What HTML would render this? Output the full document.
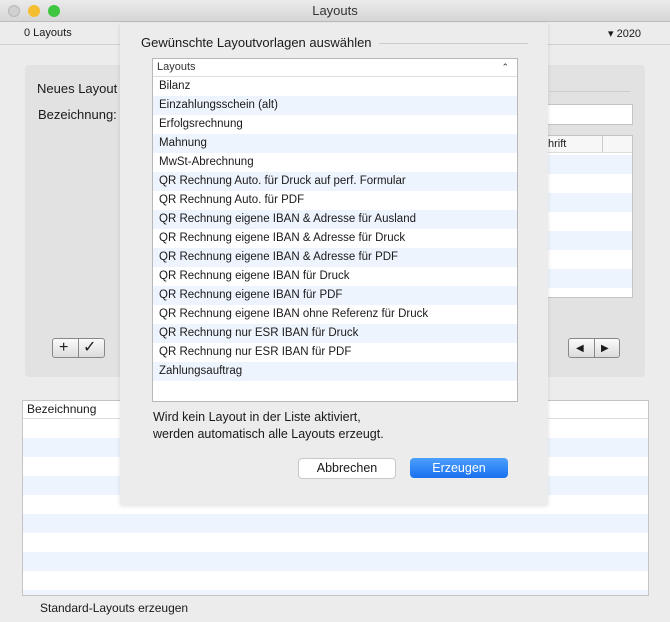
<!DOCTYPE html><html><head><style>
*{box-sizing:border-box}
body{margin:0;width:670px;height:622px;overflow:hidden;background:#ececec;font-family:"Liberation Sans",sans-serif;font-size:12px;color:#1a1a1a;position:relative}
.a{position:absolute}
.row{height:19px;line-height:19px;padding-left:6px;font-size:11.5px}
.b{background:#eef4fd}
</style></head><body>
<div class="a" style="left:0;top:0;width:670px;height:22px;background:linear-gradient(#ebebeb,#d6d6d6);border-bottom:1px solid #bdbdbd;text-align:center;line-height:22px;font-size:13px;color:#333">Layouts</div>
<div class="a" style="left:8px;top:5px;width:12px;height:12px;border-radius:50%;background:#d0d0d0;border:0.5px solid #b8b8b8"></div>
<div class="a" style="left:28px;top:5px;width:12px;height:12px;border-radius:50%;background:#f5bd30"></div>
<div class="a" style="left:48px;top:5px;width:12px;height:12px;border-radius:50%;background:#3ec640"></div>
<div class="a" style="left:24px;top:27px;font-size:11px">0 Layouts</div>
<div class="a" style="left:608px;top:27px;font-size:11px">▾ 2020</div>
<div class="a" style="left:0;top:44px;width:670px;height:1px;background:#d0d0d0"></div>
<div class="a" style="left:25px;top:65px;width:620px;height:312px;background:#e2e2e2;border-radius:4px"></div>
<div class="a" style="left:37px;top:81px;font-size:13px">Neues Layout</div>
<div class="a" style="left:38px;top:107px;font-size:13px">Bezeichnung:</div>
<div class="a" style="left:550px;top:91px;width:80px;height:1px;background:#ccc"></div>
<div class="a" style="left:537px;top:104px;width:96px;height:21px;background:#fff;border:1px solid #c4c4c4"></div>
<div class="a" style="left:537px;top:135px;width:96px;height:163px;background:repeating-linear-gradient(#fff 0 19px,#eef4fd 19px 38px);border:1px solid #c4c4c4;overflow:hidden">
<div style="height:17px;background:#f7f7f7;border-bottom:1px solid #ddd;font-size:11px;padding-left:10px;line-height:16px">hrift<span style="position:absolute;left:64px;top:0;width:1px;height:16px;background:#ccc"></span></div></div>
<div class="a" style="left:52px;top:338px;width:53px;height:20px;border:1px solid #888;border-radius:3px;background:linear-gradient(#fafafa,#dcdcdc);font-size:16px;line-height:18px"><span style="position:absolute;left:6px">+</span><span style="position:absolute;left:25px;top:0;width:1px;height:19px;background:#888"></span><span style="position:absolute;left:30px">✓</span></div>
<div class="a" style="left:568px;top:338px;width:52px;height:20px;border:1px solid #888;border-radius:3px;background:linear-gradient(#fafafa,#dcdcdc);font-size:10px;line-height:19px"><span style="position:absolute;left:7px">◀</span><span style="position:absolute;left:25px;top:0;width:1px;height:19px;background:#888"></span><span style="position:absolute;left:32px">▶</span></div>
<div class="a" style="left:22px;top:400px;width:627px;height:196px;border:1px solid #c4c4c4;overflow:hidden;background:repeating-linear-gradient(#fff 0 19px,#eef4fd 19px 38px);background-position:0 18px">
<div style="height:18px;background:#fff;border-bottom:1px solid #ddd;font-size:12px;padding-left:4px;line-height:17px">Bezeichnung</div></div>
<div class="a" style="left:40px;top:601px;font-size:12px">Standard-Layouts erzeugen</div>
<div class="a" style="left:120px;top:23px;width:428px;height:482px;background:#ececec;box-shadow:0 1px 4px rgba(0,0,0,.12)"></div>
<div class="a" style="left:141px;top:35px;font-size:13px">Gewünschte Layoutvorlagen auswählen</div>
<div class="a" style="left:379px;top:43px;width:149px;height:1px;background:#ccc"></div>
<div class="a" style="left:152px;top:58px;width:366px;height:344px;border:1px solid #b8b8b8;background:#fff">
<div style="height:18px;line-height:17px;border-bottom:1px solid #ddd;padding-left:4px;font-size:11px;color:#333">Layouts<span style="position:absolute;right:8px;font-size:9px">⌃</span></div>
<div class="row">Bilanz</div><div class="row b">Einzahlungsschein (alt)</div><div class="row">Erfolgsrechnung</div><div class="row b">Mahnung</div><div class="row">MwSt-Abrechnung</div><div class="row b">QR Rechnung Auto. für Druck auf perf. Formular</div><div class="row">QR Rechnung Auto. für PDF</div><div class="row b">QR Rechnung eigene IBAN &amp; Adresse für Ausland</div><div class="row">QR Rechnung eigene IBAN &amp; Adresse für Druck</div><div class="row b">QR Rechnung eigene IBAN &amp; Adresse für PDF</div><div class="row">QR Rechnung eigene IBAN für Druck</div><div class="row b">QR Rechnung eigene IBAN für PDF</div><div class="row">QR Rechnung eigene IBAN ohne Referenz für Druck</div><div class="row b">QR Rechnung nur ESR IBAN für Druck</div><div class="row">QR Rechnung nur ESR IBAN für PDF</div><div class="row b">Zahlungsauftrag</div><div class="row"></div>
</div>
<div class="a" style="left:153px;top:409px;font-size:12.5px;line-height:17px">Wird kein Layout in der Liste aktiviert,<br>werden automatisch alle Layouts erzeugt.</div>
<div class="a" style="left:298px;top:458px;width:98px;height:21px;background:#fff;border:1px solid #c8c8c8;border-radius:4px;text-align:center;line-height:19px;font-size:12.5px">Abbrechen</div>
<div class="a" style="left:410px;top:458px;width:98px;height:20px;background:linear-gradient(#4ca0fb,#1a6ff0);border-radius:4px;text-align:center;line-height:20px;font-size:12.5px;color:#fff">Erzeugen</div>
</body></html>
